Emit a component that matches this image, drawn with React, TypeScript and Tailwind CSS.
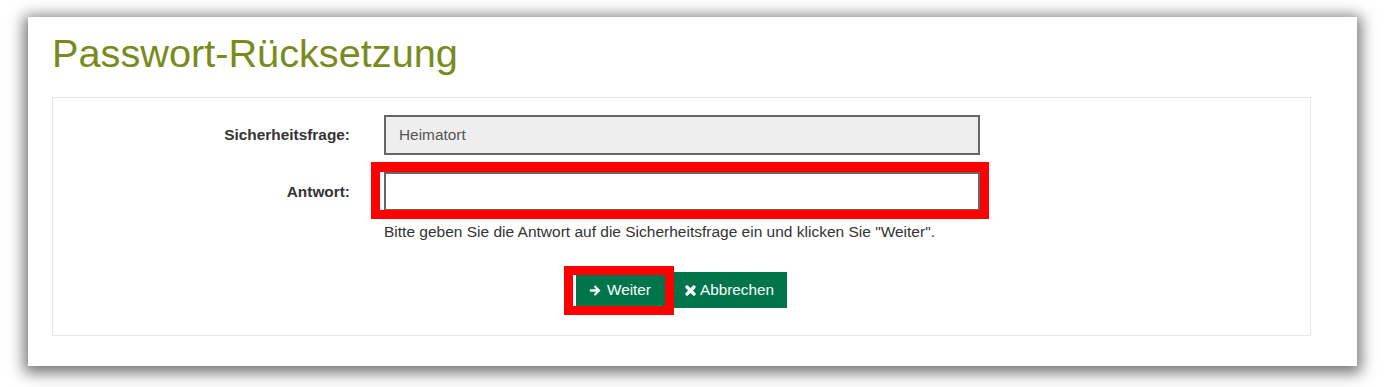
import React from 'react'

const font = { fontFamily: '"Liberation Sans", Arial, sans-serif' }

function ArrowIcon() {
    return (
        <svg width="12" height="13" viewBox="0 0 14 14" className="fill-white">
            <path d="M1 5.4h7.4L5.6 2.6 7.3 0.9 13.4 7 7.3 13.1 5.6 11.4 8.4 8.6H1z" />
        </svg>
    )
}

function TimesIcon() {
    return (
        <svg width="11" height="11" viewBox="0 0 11 11">
            <path d="M2 2l7 7M9 2l-7 7" stroke="white" strokeWidth="3.2" strokeLinecap="round" />
        </svg>
    )
}

export default function App() {
    return (
        <div className="w-[1390px] h-[387px] bg-white pt-[17px] pl-[28px] overflow-hidden" style={font}>
            <div className="w-[1329px] h-[349px] bg-white shadow-[0_3px_14px_4px_rgba(0,0,0,0.55)] pt-[14px] pl-[24px]">
                <h1 className="text-[39.7px] leading-[44px] text-[#788b1d] font-normal">
                    Passwort-Rücksetzung
                </h1>

                {/* Form box */}
                <div className="mt-[22px] w-[1259px] h-[239px] border border-[#e6e6e6] pt-[17px]">
                    <div className="flex items-center h-[40px]">
                        <label className="w-[297px] text-right text-[15.4px] font-bold text-[#333]">
                            Sicherheitsfrage:
                        </label>
                        <div className="ml-[34px] w-[596px] h-[40px] border-2 border-[#666] bg-[#eeeeee] flex items-center pl-[13px] text-[15.4px] text-[#555]">
                            Heimatort
                        </div>
                    </div>

                    <div className="flex items-center h-[39px] mt-[17px]">
                        <label className="w-[297px] text-right text-[15.4px] font-bold text-[#333]">
                            Antwort:
                        </label>
                        <div className="relative ml-[34px]">
                            <input className="block w-[596px] h-[39px] border-2 border-[#666] bg-white outline-none" />
                            <span className="absolute -left-[13px] -top-[10px] w-[618px] h-[57px] border-[9px] border-t-[10px] border-[#ff0000] shadow-[inset_4px_0_0_#fff] pointer-events-none" />
                        </div>
                    </div>

                    <p className="ml-[331px] mt-[11px] text-[15.5px] leading-[20px] text-[#333]">
                        Bitte geben Sie die Antwort auf die Sicherheitsfrage ein und klicken Sie "Weiter".
                    </p>

                    <div className="flex justify-center gap-[4px] mt-[30px]">
                        <div className="relative">
                            <button className="h-[36px] w-[94px] bg-[#00744a] text-white text-[15.3px] flex items-center pl-[13px] gap-[6px]">
                                <ArrowIcon />
                                Weiter
                            </button>
                            <span className="absolute -left-[12px] -top-[6px] w-[110px] h-[49px] border-[9px] border-[#ff0000] shadow-[inset_3px_0_0_#fff] pointer-events-none" />
                        </div>
                        <button className="h-[36px] w-[113px] bg-[#00744a] text-white text-[15.3px] flex items-center pl-[11px] gap-[4px]">
                            <TimesIcon />
                            Abbrechen
                        </button>
                    </div>
                </div>
            </div>
        </div>
    )
}
